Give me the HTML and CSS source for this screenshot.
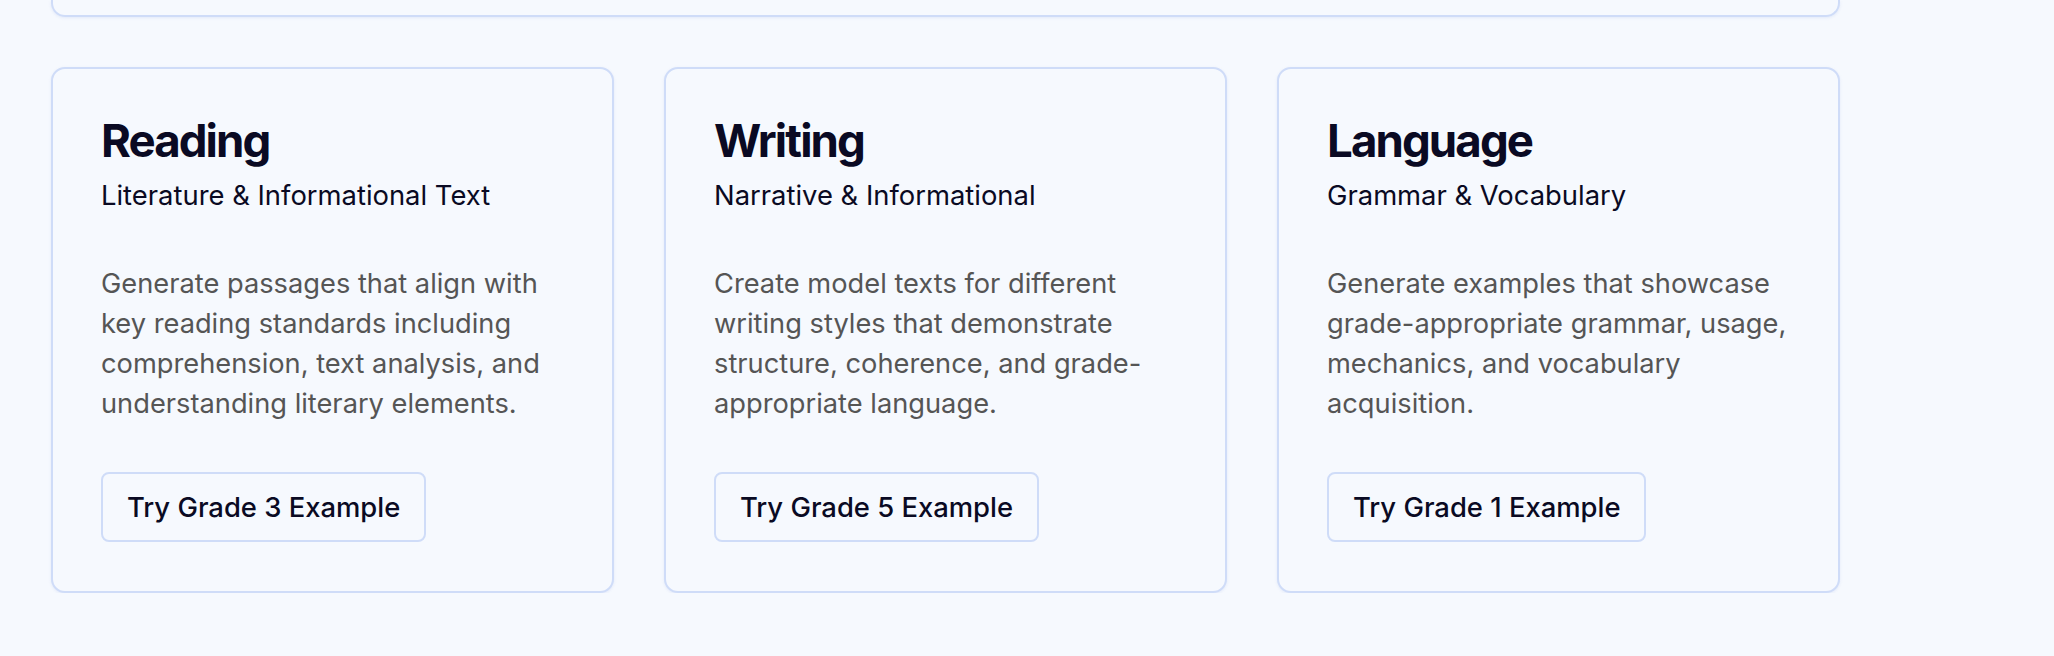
FILE: index.html
```html
<!DOCTYPE html>
<html lang="en">
<head>
<meta charset="utf-8">
<title>ELA Examples</title>
<link rel="stylesheet" href="styles.css">
</head>
<body>
<main class="page">
  <div class="top-card"></div>
  <section class="grid">
    <article class="card">
      <h2 class="card-title">Reading</h2>
      <p class="card-sub">Literature &amp; Informational Text</p>
      <p class="card-text">Generate passages that align with key reading standards including comprehension, text analysis, and understanding literary elements.</p>
      <button class="btn" type="button">Try Grade 3 Example</button>
    </article>
    <article class="card">
      <h2 class="card-title">Writing</h2>
      <p class="card-sub">Narrative &amp; Informational</p>
      <p class="card-text">Create model texts for different writing styles that demonstrate structure, coherence, and grade-appropriate language.</p>
      <button class="btn" type="button">Try Grade 5 Example</button>
    </article>
    <article class="card">
      <h2 class="card-title">Language</h2>
      <p class="card-sub">Grammar &amp; Vocabulary</p>
      <p class="card-text">Generate examples that showcase grade-appropriate grammar, usage, mechanics, and vocabulary acquisition.</p>
      <button class="btn" type="button">Try Grade 1 Example</button>
    </article>
  </section>
</main>
</body>
</html>
```
FILE: styles.css
```css
* { box-sizing: border-box; }
html, body {
  margin: 0;
  padding: 0;
  background: #f6f9fe;
}
body {
  font-family: Inter, "Noto Sans", sans-serif;
  color: #0a0a23;
}
.page {
  width: 1840px;
  padding-left: 51px;
}
.top-card {
  height: 17px;
  border: 2px solid #cfdcf8;
  border-top: none;
  border-radius: 0 0 14px 14px;
  box-shadow: 0 1px 3px rgba(120, 150, 220, 0.15);
  margin-bottom: 50px;
}
.grid {
  display: grid;
  grid-template-columns: repeat(3, 1fr);
  gap: 50px;
  align-items: stretch;
}
.card {
  border: 2px solid #cfdcf8;
  border-radius: 14px;
  padding: 46px 48px 49px;
  background: #f6f9fe;
  box-shadow: 0 1px 3px rgba(120, 150, 220, 0.15);
  display: flex;
  flex-direction: column;
  align-items: flex-start;
}
.card-title {
  margin: 0;
  font-size: 45.6px;
  line-height: 1.15;
  font-weight: 700;
  letter-spacing: -1.9px;
  color: #0a0a23;
}
.card-sub {
  margin: 10px 0 0;
  font-size: 27.4px;
  line-height: 36px;
  color: #0a0a23;
}
.card-text {
  margin: 51px 0 0;
  font-size: 27.25px;
  line-height: 40px;
  color: #555555;
  flex: 1;
}
.btn {
  margin-top: 48px;
  font-family: inherit;
  font-size: 27.4px;
  font-weight: 500;
  color: #0a0a23;
  background: #f6f9fe;
  border: 2px solid #cfdcf8;
  border-radius: 8px;
  padding: 0 24px;
  height: 70px;
  cursor: pointer;
}
```
